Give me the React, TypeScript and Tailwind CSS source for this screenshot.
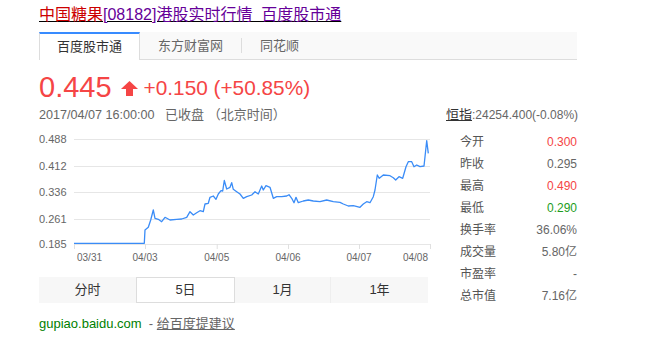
import React from 'react';

const FONT = "font-['Liberation_Sans','Noto_Sans_CJK_SC',sans-serif]";

// 股价折线（页面坐标，画图时减去原点）
const linePoints: [number, number][] = [
    [74, 243.3], [144.3, 243.3], [145, 230], [148.3, 227.3], [150.7, 220], [153.3, 210],
    [155, 218.3], [158.3, 219.3], [161.7, 221.7], [165, 217.3], [170, 220], [176.7, 219.3],
    [181.7, 219], [186.7, 217.3], [190, 211.7], [193.3, 215], [196.7, 212.7], [200, 210.7],
    [203.3, 211.7], [205, 204], [208.3, 203.3], [210, 197.3], [213.3, 196], [216, 199.3],
    [218.3, 194], [221, 190.7], [222.7, 191], [224.3, 180.5], [226.7, 189], [230, 187.3],
    [231.7, 182.7], [233.3, 189.3], [236.7, 191.7], [240, 194], [243.3, 198.3], [246.7, 196.7],
    [251.7, 195], [255, 191.7], [258.3, 194], [261.7, 186], [263.3, 190], [266, 185.7],
    [270, 187.3], [273.3, 198.3], [276.7, 196.7], [281.7, 196.7], [286.7, 196], [289, 194.7],
    [291.7, 198.3], [294, 202.7], [296, 197.3], [298.3, 202.7], [303.3, 201], [308.3, 200],
    [313.3, 201], [320, 201.7], [326.7, 200], [333.3, 201.7], [340, 202.3], [343.3, 204],
    [348.3, 206], [353.3, 205.7], [360, 207.3], [363.3, 204], [366.7, 201.7], [370, 202.7],
    [373.3, 196.7], [375, 190], [377.3, 175], [379.3, 178.3], [383.3, 175], [390, 175.7],
    [393.3, 177.7], [395.7, 180], [399, 176.7], [402.7, 178.3], [406, 166.7], [408.3, 161.7],
    [411.7, 161.7], [414, 166.7], [416.7, 165], [420, 166.7], [424, 166], [425, 156.7],
    [426.7, 140.7], [428.3, 153.3],
];

const ORIGEN_X = 39;
const ORIGEN_Y = 128;

const ejeY = [
    { valor: '0.488', y: 139 },
    { valor: '0.412', y: 166 },
    { valor: '0.336', y: 192 },
    { valor: '0.261', y: 219 },
    { valor: '0.185', y: 244 },
];

const ticks = [74, 145, 216.7, 288, 359, 430];

const GraficoPrecio = () => {
    const puntos = linePoints.map(([x, y]) => `${x - ORIGEN_X},${y - ORIGEN_Y}`).join(' ');
    return (
        <svg width={392} height={142} className="block" style={{ fontFamily: "'Liberation Sans', Arial, sans-serif" }}>
            {ejeY.map((l) => (
                <g key={l.valor}>
                    <line x1={35} x2={391} y1={l.y - ORIGEN_Y + 0.5} y2={l.y - ORIGEN_Y + 0.5} stroke="#e6e6e6" strokeWidth={1} />
                    <text x={0} y={l.y - ORIGEN_Y + 4} fontSize={11} fill="#666">{l.valor}</text>
                </g>
            ))}
            {ticks.map((t) => (
                <line key={t} x1={t - ORIGEN_X + 0.5} x2={t - ORIGEN_X + 0.5} y1={116} y2={121} stroke="#e0e0e0" strokeWidth={1} />
            ))}
            <polyline points={puntos} fill="none" stroke="#3a8cf7" strokeWidth={1.3} strokeLinejoin="round" />
            <text x={38} y={133} fontSize={10} fill="#666">03/31</text>
            <text x={106} y={133} fontSize={10} fill="#666" textAnchor="middle">04/03</text>
            <text x={177.7} y={133} fontSize={10} fill="#666" textAnchor="middle">04/05</text>
            <text x={249} y={133} fontSize={10} fill="#666" textAnchor="middle">04/06</text>
            <text x={320} y={133} fontSize={10} fill="#666" textAnchor="middle">04/07</text>
            <text x={389} y={133} fontSize={10} fill="#666" textAnchor="end">04/08</text>
        </svg>
    );
};

const datos = [
    { etiqueta: '今开', valor: '0.300', color: 'text-[#f54545]' },
    { etiqueta: '昨收', valor: '0.295', color: 'text-[#666]' },
    { etiqueta: '最高', valor: '0.490', color: 'text-[#f54545]' },
    { etiqueta: '最低', valor: '0.290', color: 'text-[#1d9d1d]' },
    { etiqueta: '换手率', valor: '36.06%', color: 'text-[#666]' },
    { etiqueta: '成交量', valor: '5.80亿', color: 'text-[#666]' },
    { etiqueta: '市盈率', valor: '-', color: 'text-[#666]' },
    { etiqueta: '总市值', valor: '7.16亿', color: 'text-[#666]' },
];

const FlechaArriba = () => (
    <svg width={17} height={15} viewBox="0 0 17 15" className="block">
        <polygon points="8.5,0 17,8 12,8 12,15 5,15 5,8 0,8" fill="#f54545" />
    </svg>
);

export default function App() {
    return (
        <div className={`w-[651px] h-[344px] bg-white pl-[39px] pt-[4px] ${FONT}`}>
            {/* Titulo */}
            <div className="text-[16px] leading-[22px] underline whitespace-nowrap">
                <span className="text-[#cc0000]">中国糖果</span>
                <span className="text-[#660099]">[08182]港股实时行情&nbsp;&nbsp;百度股市通</span>
            </div>

            {/* Pestañas de fuente */}
            <div className="mt-[6px] w-[538px] h-[28px] flex bg-[#f9f9f9] border-b border-[#ddd] text-[13px]">
                <div className="h-[28px] px-[17px] flex items-center bg-white border-t-2 border-t-[#388bff] border-x border-x-[#ddd] text-[#333]">
                    百度股市通
                </div>
                <div className="px-[18px] flex items-center text-[#666]">东方财富网</div>
                <div className="w-px h-[15px] self-center bg-[#ddd]" />
                <div className="px-[18px] flex items-center text-[#666]">同花顺</div>
            </div>

            {/* Precio */}
            <div className="mt-[11px] h-[32px] flex items-center text-[#f54545]">
                <span className="text-[29px] leading-[32px]">0.445</span>
                <span className="ml-[9px] mt-[2px]"><FlechaArriba /></span>
                <span className="ml-[6px] text-[20.8px] leading-[32px] mt-[2px]">+0.150 (+50.85%)</span>
            </div>

            <div className="flex">
                {/* Columna izquierda */}
                <div className="w-[392px]">
                    <div className="mt-[4px] h-[16px] text-[12.6px] leading-[16px] text-[#666] whitespace-nowrap">
                        2017/04/07 16:00:00&nbsp;&nbsp;&nbsp;<span className="text-[13px]">已收盘 （北京时间）</span>
                    </div>
                    <div className="mt-[5px]">
                        <GraficoPrecio />
                    </div>
                    <div className="mt-[7px] w-[389px] h-[26px] flex bg-[#f7f7f7] text-[13px] text-[#333]">
                        <div className="w-[97px] flex items-center justify-center">分时</div>
                        <div className="w-[99px] flex items-center justify-center bg-white border border-[#ddd]">5日</div>
                        <div className="w-[96px] flex items-center justify-center border-r border-[#eee]">1月</div>
                        <div className="flex-1 flex items-center justify-center">1年</div>
                    </div>
                </div>

                {/* Columna derecha */}
                <div className="ml-[15px] w-[131px]">
                    <div className="mt-[4px] h-[16px] text-[12px] leading-[16px] text-[#666] whitespace-nowrap">
                        <span className="underline text-[#333] text-[13px]">恒指</span>:24254.400(-0.08%)
                    </div>
                    <div className="mt-[8px]">
                        {datos.map((d) => (
                            <div key={d.etiqueta} className="h-[22px] flex items-center justify-between pl-[14px] text-[12px]">
                                <span className="text-[#555]">{d.etiqueta}</span>
                                <span className={d.color}>{d.valor}</span>
                            </div>
                        ))}
                    </div>
                </div>
            </div>

            {/* Pie */}
            <div className="mt-[8px] text-[13px] leading-[18px] whitespace-nowrap">
                <span className="text-[#008000]">gupiao.baidu.com</span>
                <span className="text-[#666]">&nbsp;&nbsp;-&nbsp;</span>
                <span className="text-[#666] underline">给百度提建议</span>
            </div>
        </div>
    );
}
